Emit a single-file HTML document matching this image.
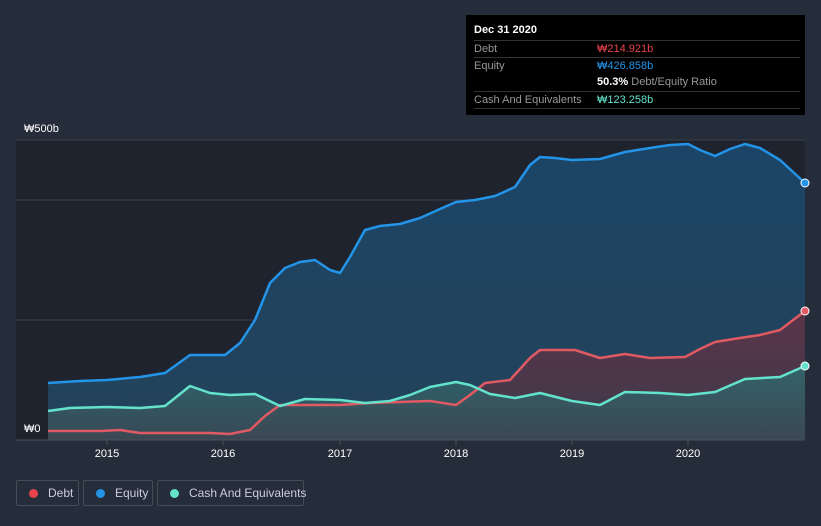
<!DOCTYPE html><html><head><meta charset="utf-8"><style>
html,body{margin:0;width:821px;height:526px;overflow:hidden}
body{background:#262d3a;font-family:"Liberation Sans","Noto Sans CJK KR",sans-serif;position:relative}
.tt{position:absolute;left:466px;top:15px;width:339px;height:100px;background:#000;color:#fff;font-size:11px}
.tt .r{position:absolute;left:8px;right:5px;border-top:1px solid #333;height:17px;line-height:17px;color:#999}
.tt span{position:absolute;left:123px}
.leg{position:absolute;top:480px;height:26px;border:1px solid #454c58;border-radius:2px;color:#ccd;font-size:12px;line-height:24px;box-sizing:border-box;white-space:nowrap}
.leg i{display:inline-block;width:9px;height:9px;border-radius:50%;margin:0 10px 0 12px;vertical-align:-1px}
</style></head><body>
<svg width="821" height="526" style="position:absolute;left:0;top:0">
<defs>
<linearGradient id="ge" x1="0" y1="0" x2="0" y2="1"><stop offset="0" stop-color="#1b4466"/><stop offset="1" stop-color="#24435a"/></linearGradient>
<linearGradient id="gd" x1="0" y1="0" x2="0" y2="1"><stop offset="0" stop-color="#5a3448"/><stop offset="1" stop-color="#3d3a4c"/></linearGradient>
<linearGradient id="gc" x1="0" y1="0" x2="0" y2="1"><stop offset="0" stop-color="#2f6a6e"/><stop offset="1" stop-color="#3b4a55"/></linearGradient>
</defs>
<rect x="16" y="140" width="789" height="300" fill="#1e232d"/>
<line x1="16" y1="140" x2="805" y2="140" stroke="#3a404b"/>
<line x1="16" y1="200" x2="805" y2="200" stroke="#3a404b"/>
<line x1="16" y1="320" x2="805" y2="320" stroke="#3a404b"/>
<path fill="url(#ge)" d="M48,383 L80,381 107,380 140,377 165,373 190,355 210,355 225,355 240,343 255,320 270,283 285,268 300,262 315,260 330,270 340,273 350,257 365,230 380,226 400,224 420,218 440,209 456,202 475,200 495,196 515,187 530,165 540,157 555,158 572,160 600,159 625,152 650,148 670,145 688,144 700,150 715,156 730,149 745,144 760,148 780,160 805,183 L805,440 L48,440Z"/>
<path fill="url(#gd)" d="M48,431 L100,431 120,430 140,433 210,433 230,434 250,430 265,416 280,405 300,405 340,405 370,403 400,402 430,401 456,405 470,395 485,383 510,380 530,358 540,350 575,350 600,358 625,354 650,358 685,357 700,349 715,342 740,338 760,335 780,330 805,311 L805,440 L48,440Z"/>
<path fill="url(#gc)" opacity="0.85" d="M48,411 L70,408 107,407 140,408 165,406 190,386 210,393 230,395 255,394 280,406 305,399 340,400 365,403 390,401 410,395 430,387 456,382 470,385 490,394 515,398 540,393 572,401 600,405 625,392 660,393 688,395 715,392 745,379 780,377 805,366 L805,440 L48,440Z"/>
<polyline fill="none" stroke="#2394e8" stroke-width="2.5" stroke-linejoin="round" points="48,383 80,381 107,380 140,377 165,373 190,355 210,355 225,355 240,343 255,320 270,283 285,268 300,262 315,260 330,270 340,273 350,257 365,230 380,226 400,224 420,218 440,209 456,202 475,200 495,196 515,187 530,165 540,157 555,158 572,160 600,159 625,152 650,148 670,145 688,144 700,150 715,156 730,149 745,144 760,148 780,160 805,183"/>
<polyline fill="none" stroke="#e05a63" stroke-width="2.5" stroke-linejoin="round" points="48,431 100,431 120,430 140,433 210,433 230,434 250,430 265,416 280,405 300,405 340,405 370,403 400,402 430,401 456,405 470,395 485,383 510,380 530,358 540,350 575,350 600,358 625,354 650,358 685,357 700,349 715,342 740,338 760,335 780,330 805,311"/>
<polyline fill="none" stroke="#64e3cc" stroke-width="2.5" stroke-linejoin="round" points="48,411 70,408 107,407 140,408 165,406 190,386 210,393 230,395 255,394 280,406 305,399 340,400 365,403 390,401 410,395 430,387 456,382 470,385 490,394 515,398 540,393 572,401 600,405 625,392 660,393 688,395 715,392 745,379 780,377 805,366"/>
<circle cx="805" cy="183" r="4" fill="#2394e8" stroke="#fff" stroke-width="1"/>
<circle cx="805" cy="311" r="4" fill="#e05a63" stroke="#fff" stroke-width="1"/>
<circle cx="805" cy="366" r="4" fill="#64e3cc" stroke="#fff" stroke-width="1"/>
<line x1="16" y1="440" x2="805" y2="440" stroke="#4a505a"/>
<g stroke="#4a505a"><line x1="107" y1="440" x2="107" y2="445"/><line x1="223" y1="440" x2="223" y2="445"/><line x1="340" y1="440" x2="340" y2="445"/><line x1="456" y1="440" x2="456" y2="445"/><line x1="572" y1="440" x2="572" y2="445"/><line x1="688" y1="440" x2="688" y2="445"/></g>
<rect x="16" y="420" width="32" height="19" fill="#1e232d"/>
<g fill="#fff" font-size="11" text-anchor="middle" font-family="Liberation Sans,sans-serif"><text x="107" y="457">2015</text><text x="223" y="457">2016</text><text x="340" y="457">2017</text><text x="456" y="457">2018</text><text x="572" y="457">2019</text><text x="688" y="457">2020</text></g>
<text x="24" y="132" fill="#fff" font-size="11" font-family="Liberation Sans,sans-serif">₩500b</text>
<text x="24" y="432" fill="#fff" font-size="11" font-family="Liberation Sans,sans-serif">₩0</text>
</svg>
<div class="tt">
<div style="position:absolute;left:8px;top:9px;font-weight:bold">Dec 31 2020</div>
<div class="r" style="top:25px">Debt<span style="color:#e8424c">₩214.921b</span></div>
<div class="r" style="top:42px">Equity<span style="color:#2394e8">₩426.858b</span></div>
<div class="r" style="top:59px;border:0"><span style="color:#fff"><b>50.3%</b> <span style="position:static;color:#999">Debt/Equity Ratio</span></span></div>
<div class="r" style="top:76px">Cash And Equivalents<span style="color:#64e3cc">₩123.258b</span></div>
<div class="r" style="top:93px;height:0"></div>
</div>
<div class="leg" style="left:16px;width:63px"><i style="background:#e8424c"></i>Debt</div>
<div class="leg" style="left:83px;width:70px"><i style="background:#2394e8"></i>Equity</div>
<div class="leg" style="left:157px;width:147px"><i style="background:#64e3cc"></i>Cash And Equivalents</div>
</body></html>
